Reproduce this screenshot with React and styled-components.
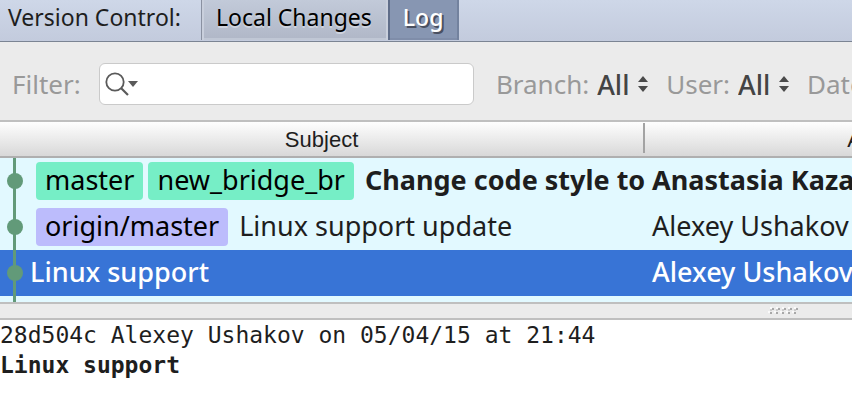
import React from 'react'
import styled, { createGlobalStyle } from 'styled-components'

const tabs = [
    { name: 'Local Changes', active: false },
    { name: 'Log', active: true },
]

const filters = ['Branch', 'User', 'Date']

const commits = [
    {
        id: 1,
        refs: [
            { name: 'master', color: '#76eec6' },
            { name: 'new_bridge_br', color: '#76eec6' },
        ],
        subject: 'Change code style to',
        author: 'Anastasia Kazakova',
        bold: true,
    },
    {
        id: 2,
        refs: [{ name: 'origin/master', color: '#bcbcfc' }],
        subject: 'Linux support update',
        author: 'Alexey Ushakov',
    },
    {
        id: 3,
        refs: [],
        subject: 'Linux support',
        author: 'Alexey Ushakov',
        selected: true,
    },
]

function App() {
    const showTabs = tabs.map((ele) => (
        <Tab key={ele.name} type='button' role='tab' aria-selected={ele.active} $active={ele.active}>
            {ele.name}
        </Tab>
    ))

    const showFilters = filters.map((name) => (
        <FilterLabel key={name}>
            {name}:
            <FilterSelect defaultValue='All'>
                <option>All</option>
            </FilterSelect>
            <Arrows />
        </FilterLabel>
    ))

    const showCommits = commits.map((ele) => (
        <CommitRow key={ele.id} $selected={ele.selected} $bold={ele.bold}>
            <td>
                <SubjectCell>
                    <GraphNode />
                    {ele.refs.length > 0 && (
                        <Refs>
                            {ele.refs.map((ref) => (
                                <Ref key={ref.name} $color={ref.color}>{ref.name}</Ref>
                            ))}
                        </Refs>
                    )}
                    <Subject>{ele.subject}</Subject>
                </SubjectCell>
            </td>
            <AuthorCell>{ele.author}</AuthorCell>
        </CommitRow>
    ))

    return (
        <Window>
            <GlobalStyle />
            <TitleBar>
                <Title>Version Control:</Title>
                <Tabs role='tablist'>{showTabs}</Tabs>
            </TitleBar>
            <FilterBar>
                <SearchLabel htmlFor='filter'>Filter:</SearchLabel>
                <SearchBox>
                    <SearchIcon />
                    <SearchInput id='filter' type='text' />
                </SearchBox>
                {showFilters}
            </FilterBar>
            <LogPane>
                <LogTable>
                    <colgroup>
                        <SubjectCol />
                        <col />
                    </colgroup>
                    <thead>
                        <tr>
                            <HeadCell><HeadText $divider>Subject</HeadText></HeadCell>
                            <HeadCell><HeadText>Author</HeadText></HeadCell>
                        </tr>
                    </thead>
                    <tbody>{showCommits}</tbody>
                    <tfoot>
                        <tr>
                            <TailCell colSpan={2}><TailLine /></TailCell>
                        </tr>
                    </tfoot>
                </LogTable>
            </LogPane>
            <Splitter>
                <Grip />
            </Splitter>
            <Details>
                <p>28d504c Alexey Ushakov on 05/04/15 at 21:44</p>
                <h2>Linux support</h2>
            </Details>
        </Window>
    )
}

function SearchIcon() {
    return (
        <svg width='34' height='26' viewBox='0 0 34 26' fill='none' aria-hidden='true'>
            <circle cx='10' cy='11' r='8.7' stroke='#5a5a5a' strokeWidth='1.8' />
            <path d='M16 17l7 7' stroke='#5a5a5a' strokeWidth='2.2' />
            <path d='M23 10h10l-5 6z' fill='#5a5a5a' />
        </svg>
    )
}

function Arrows() {
    return (
        <svg width='10' height='16' viewBox='0 0 10 16' fill='#4a4a4a' aria-hidden='true'>
            <path d='M5 0l5 6H0z' />
            <path d='M0 10h10l-5 6z' />
        </svg>
    )
}

// one commit on the branch line
function GraphNode() {
    return (
        <svg width='30' height='46' viewBox='0 0 30 46' fill='#629a79' aria-hidden='true'>
            <rect x='13' y='0' width='3' height='46' />
            <circle cx='15' cy='23' r='8' />
        </svg>
    )
}

function Grip() {
    return (
        <svg width='32' height='8' viewBox='0 0 32 8' aria-hidden='true'>
            {[0, 6, 12, 18, 24].map((x) => (
                <g key={x}>
                    <path d={`M${x + 2} 0h2v2h-2zM${x} 4h2v2h-2z`} fill='#fafafa' />
                    <path d={`M${x + 4} 1h2v2h-2zM${x + 2} 5h2v2h-2z`} fill='#a8a8a8' />
                    <path d={`M${x + 2} 2h2v2h-2z`} fill='#cccccc' />
                </g>
            ))}
        </svg>
    )
}

const GlobalStyle = createGlobalStyle`
* {
    box-sizing: border-box;
}
html, body, #root {
    height: 100%;
}
body {
    margin: 0;
    background: #fff;
    color: #1e1e1e;
    font-family: "Noto Sans", "Open Sans", sans-serif;
}
`;

const Window = styled.div`
display: flex;
flex-direction: column;
min-height: 100%;
overflow: hidden;
`;

const TitleBar = styled.header`
display: flex;
align-items: stretch;
padding-bottom: 1px;
border-bottom: 1px solid #7b8493;
background: linear-gradient(#ced7e8, #c3cbdd);
font-size: 23px;
`;

const Title = styled.span`
width: 201px;
padding-left: 8px;
line-height: 34px;
white-space: nowrap;
`;

const Tabs = styled.div`
display: flex;
`;

const Tab = styled.button`
height: 40px;
padding: 0 16px 6px 15px;
border: none;
box-shadow: ${({ $active }) => ($active
    ? 'inset 2px 0 #5f6d89, inset -2px 0 #73829e, inset 0 -2px #7f8da9'
    : 'inset 1px 0 #8a91a1, inset 3px 0 #c9cfdc, inset -2px 0 #c9cfdc, inset 0 -2px #c0c7d5')};
background: ${({ $active }) => ($active ? '#8796b2' : 'linear-gradient(#c2cad9, #b0b7c7)')};
color: ${({ $active }) => ($active ? '#fff' : '#000')};
text-shadow: ${({ $active }) => ($active ? '2px 2px #4a5060' : '0 2px #cfd4df')};
font-family: inherit;
font-size: 23px;
font-weight: ${({ $active }) => ($active ? 500 : 400)};
line-height: 34px;
white-space: nowrap;
`;

const FilterBar = styled.div`
display: flex;
align-items: center;
height: 78px;
padding: 6px 0 0 12px;
background: #ebebeb;
color: #999;
font-size: 26px;
white-space: nowrap;
`;

const SearchLabel = styled.label`
flex: none;
width: 87px;
`;

const SearchBox = styled.div`
display: flex;
flex: none;
align-items: center;
width: 44vw;
height: 42px;
margin-right: 22px;
padding: 0 5px;
border: 1px solid #cacaca;
border-radius: 6px;
background: #fff;
`;

const SearchInput = styled.input`
flex: 1;
min-width: 0;
border: none;
outline: none;
background: none;
font: inherit;
`;

const FilterLabel = styled.label`
display: flex;
flex: none;
align-items: center;
gap: 8px;
margin-right: 18px;
`;

const FilterSelect = styled.select`
appearance: none;
padding: 0;
border: none;
background: none;
color: #444;
font: inherit;
font-size: 27px;
font-weight: 500;
`;

const LogPane = styled.main`
overflow: hidden;
border: solid #bfbfbf;
border-width: 2px 0;
background: #e2f9ff;
`;

const LogTable = styled.table`
width: 131%;
table-layout: fixed;
border-collapse: collapse;
font-size: 27px;

td {
    padding: 0;
}
`;

const SubjectCol = styled.col`
width: 57.8%;
`;

const HeadCell = styled.th`
padding: 0;
border-bottom: 2px solid #afafaf;
background: linear-gradient(#fefefe, #d8d8d8);
`;

const HeadText = styled.div`
margin: 1px 0 3px;
padding-top: 4px;
border-right: 2px solid ${({ $divider }) => ($divider ? '#a3a3a3' : 'transparent')};
font-family: "Liberation Sans", Arial, sans-serif;
font-size: 22px;
font-weight: 400;
line-height: 26px;
`;

const CommitRow = styled.tr`
background: ${({ $selected }) => ($selected ? '#3874d6' : 'transparent')};
color: ${({ $selected }) => ($selected ? '#fff' : '#1e1e1e')};
font-weight: ${({ $selected, $bold }) => ($bold ? 700 : $selected ? 500 : 400)};
`;

const SubjectCell = styled.div`
display: flex;
align-items: center;
height: 46px;
overflow: hidden;
white-space: nowrap;

svg {
    flex: none;
}
`;

const Refs = styled.div`
display: flex;
gap: 5px;
padding: 0 11px 0 6px;
`;

const Ref = styled.span`
height: 38px;
padding: 0 9px;
border-radius: 4px;
background: ${({ $color }) => $color};
color: #000;
font-weight: 400;
line-height: 36px;
`;

const Subject = styled.span`
padding-bottom: 2px;
line-height: 36px;
`;

const AuthorCell = styled.td`
&& {
    padding: 0 0 2px 7px;
}
line-height: 36px;
white-space: nowrap;
`;

const TailCell = styled.td`
height: 6px;
`;

// the branch goes on below the last visible row
const TailLine = styled.div`
width: 3px;
height: 6px;
margin-left: 13px;
background: #629a79;
`;

const Splitter = styled.div`
display: flex;
align-items: center;
justify-content: center;
height: 16px;
padding-left: 84%;
border-bottom: 2px solid #bfbfbf;
background: #ebebeb;
`;

const Details = styled.section`
flex: 1;
background: #fff;
font-family: "DejaVu Sans Mono", monospace;
font-size: 23px;
line-height: 30px;
white-space: nowrap;

p,
h2 {
    margin: 0;
    font-size: inherit;
}
`;

export default App
